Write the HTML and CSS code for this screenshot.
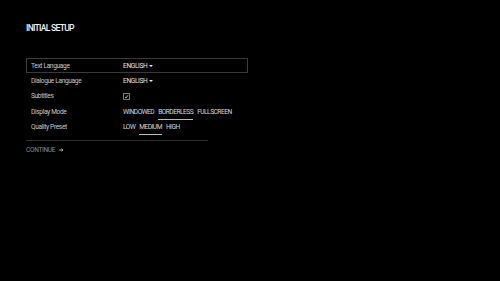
FILE: index.html
```html
<!DOCTYPE html>
<html>
<head>
<meta charset="utf-8">
<link rel="stylesheet" href="styles.css">
</head>
<body>
<div class="screen">
  <h1 class="title">INITIAL SETUP</h1>
  <div class="settings">
    <div class="row active">
      <span class="label">Text Language</span>
      <span class="value select">ENGLISH <i class="caret"></i></span>
    </div>
    <div class="row">
      <span class="label">Dialogue Language</span>
      <span class="value select">ENGLISH <i class="caret"></i></span>
    </div>
    <div class="row">
      <span class="label">Subtitles</span>
      <span class="checkbox"><svg viewBox="0 0 7 7" width="7" height="7"><path d="M2 4.2 L3 5 L5 2.3" fill="none" stroke="#e8e8e8" stroke-width="0.8"/></svg></span>
    </div>
    <div class="row">
      <span class="label">Display Mode</span>
      <span class="options">
        <span class="opt">WINDOWED</span>
        <span class="opt selected">BORDERLESS</span>
        <span class="opt">FULLSCREEN</span>
      </span>
    </div>
    <div class="row">
      <span class="label">Quality Preset</span>
      <span class="options">
        <span class="opt">LOW</span>
        <span class="opt selected">MEDIUM</span>
        <span class="opt">HIGH</span>
      </span>
    </div>
  </div>
  <div class="divider"></div>
  <div class="continue">CONTINUE <svg class="arrow" viewBox="0 0 5 4" width="5" height="4"><path d="M0 2 H4 M2.6 0.6 L4 2 L2.6 3.4" fill="none" stroke="#bbb" stroke-width="0.9"/></svg></div>
</div>
</body>
</html>
```
FILE: styles.css
```css
html, body {
  margin: 0;
  padding: 0;
  background: #000;
  width: 500px;
  height: 281px;
  overflow: hidden;
}
.screen {
  padding: 23px 26px 0 26px;
  font-family: "Roboto", "Liberation Sans", sans-serif;
  color: #d0d0d0;
}
.title {
  margin: 0;
  font-size: 8.6px;
  line-height: 11px;
  font-weight: 500;
  letter-spacing: -0.75px;
  color: #eeeeee;
}
.settings {
  margin-top: 24px;
  width: 222px;
}
.row {
  display: flex;
  align-items: center;
  height: 15.3px;
  box-sizing: border-box;
  padding-left: 4px;
  border: 1px solid transparent;
  font-size: 6.6px;
  letter-spacing: -0.35px;
}
.row.active {
  border-color: #3a3a3a;
}
.label {
  width: 92px;
  color: #c8c8c8;
}
.value {
  color: #e6e6e6;
}
.select {
  display: flex;
  align-items: center;
  gap: 2px;
}
.caret {
  display: inline-block;
  width: 0;
  height: 0;
  border-left: 2px solid transparent;
  border-right: 2px solid transparent;
  border-top: 2px solid #e6e6e6;
}
.checkbox {
  width: 7px;
  height: 7px;
  box-sizing: border-box;
  border: 1px solid #777;
  display: flex;
  align-items: center;
  justify-content: center;
}
.checkbox svg {
  display: block;
  flex: none;
}
.options {
  display: flex;
  gap: 4px;
  letter-spacing: -0.5px;
}
.opt {
  position: relative;
  color: #d8d8d8;
}
.opt.selected::after {
  content: "";
  position: absolute;
  left: 0;
  right: 0;
  bottom: -4px;
  height: 1px;
  background: #bbb;
}
.divider {
  width: 182px;
  height: 1px;
  background: #2e2e2e;
  margin-top: 6px;
}
.continue {
  display: flex;
  align-items: center;
  gap: 4px;
  margin-top: 5px;
  font-size: 6.6px;
  letter-spacing: -0.35px;
  color: #8a8a8a;
}
.arrow {
  display: block;
}
```
